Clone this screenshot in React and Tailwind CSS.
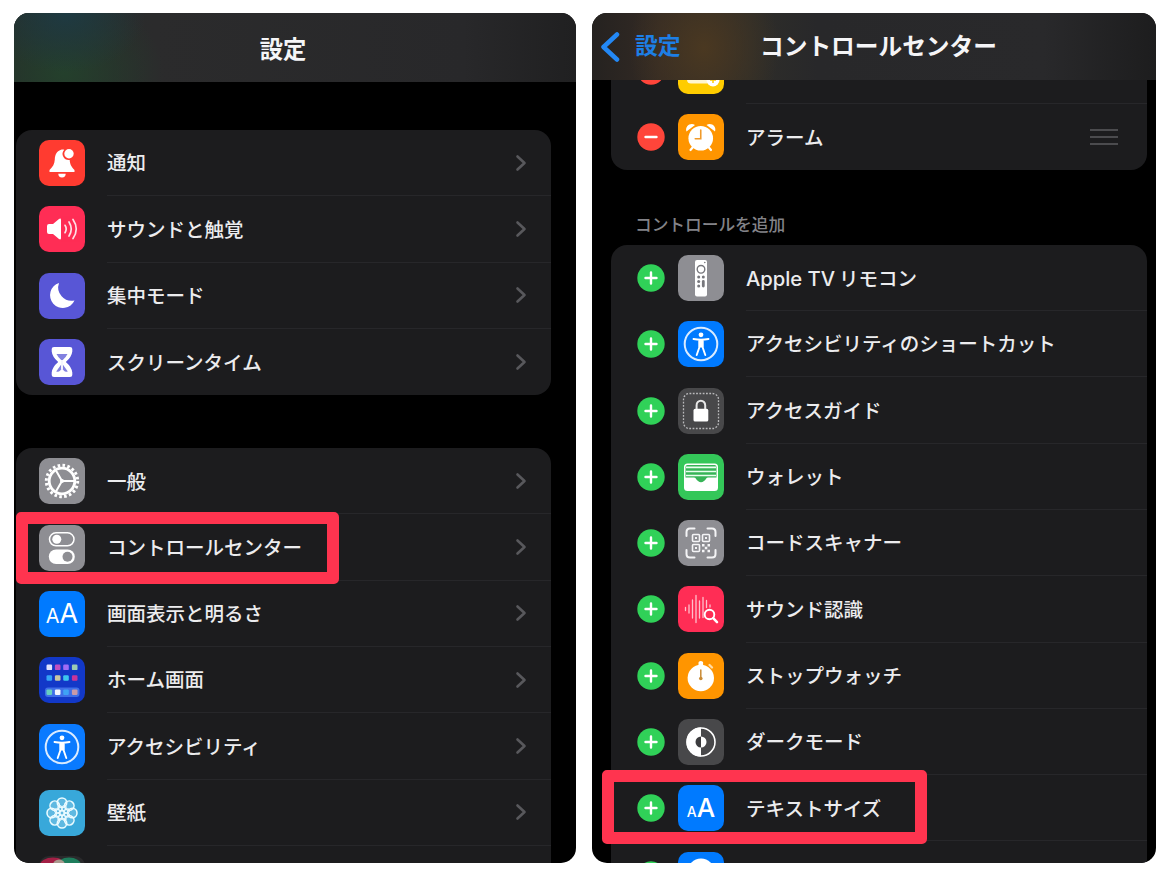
import React from 'react';
import clsx from 'clsx';

const PETALS = [0, 45, 90, 135, 180, 225, 270, 315];

const GLYPHS = {
    bell: (
        <g fill="#fff">
            <path d="M22 9.700c-4.500 1.500-6 5-6.200 9.800-.3 4.500-1.800 7-5.300 10.500v2h25v-2c-3.500-3.500-4.500-6-4.800-10a6.200 6.200 0 0 1-5.500-10.300c-1.100-.3-2.200-.3-3.200 0z" />
            <circle cx="30" cy="13.800" r="4.700" />
            <path d="M19.300 33.800h7.400a3.700 3.700 0 0 1-7.400 0z" />
        </g>
    ),
    speaker: (
        <g>
            <path d="M8 20q0-2 2-2h4l6-5q2-1.300 2 1v18q0 2.300-2 1l-6-5h-4q-2 0-2-2z" fill="#fff" />
            <g fill="none" stroke="#fff" strokeLinecap="round" strokeWidth="1.700" opacity="0.850">
                <path d="M26 19.300q2.400 3.700 0 7.400" />
                <path d="M30 16q4.500 7 0 14" />
                <path d="M34 13.500q6.500 9.500 0 19" />
            </g>
        </g>
    ),
    moon: <path d="M20 10a12.800 12.800 0 1 0 15.500 17.500A13.400 13.400 0 0 1 20 10z" fill="#fff" />,
    hourglass: (
        <g>
            <path d="M15 8h16q2.300 0 2.300 2v2.500q-.6 5.500-6.500 10.500 5.900 5 6.500 10.500V36q0 2-2.300 2H15q-2.300 0-2.300-2v-2.500q.6-5.500 6.500-10.500-5.900-5-6.500-10.500V10q0-2 2.300-2z" fill="#fff" />
            <path d="M17.500 15h11q-1.700 3.500-4.700 6v4.500l5 7q-2.500.8-3.800-.8L23 29.500l-2 2.200q-1.300 1.600-3.800.8l5-7V21q-3-2.500-4.700-6z" fill="#5856d6" opacity="0.750" />
            <path d="M23 21v9" stroke="#fff" strokeWidth="1.800" />
        </g>
    ),
    gear: (
        <g fill="none" stroke="#fff">
            <circle cx="23" cy="23" r="15.700" strokeWidth="3" strokeDasharray="2.600 2.332" />
            <circle cx="23" cy="23" r="12.800" strokeWidth="2.800" />
            <path d="M23 23h12M23 23l-6-10.400M23 23l-6 10.400" strokeWidth="2" />
            <circle cx="23" cy="23" r="2" fill="#fff" stroke="none" />
        </g>
    ),
    toggles: (
        <g>
            <rect x="10.500" y="7.800" width="24.500" height="13" rx="6.500" fill="none" stroke="#fff" strokeWidth="1.500" />
            <circle cx="17.800" cy="14.300" r="4.500" fill="#fff" />
            <rect x="9.800" y="24.500" width="26" height="14.500" rx="7.250" fill="#fff" />
            <circle cx="28.500" cy="31.700" r="5" fill="#8e8e93" />
        </g>
    ),
    home: (
        <g>
            <rect x="6" y="30.500" width="34.500" height="9.500" rx="3" fill="#3f6fe8" />
            {[
                [10.3, 10.3, '#dfe3ff'], [18.7, 10.3, '#c04fc0'], [27, 10.3, '#a06cf5'], [35.7, 10.3, '#9ccbb4'],
                [10.3, 21, '#35a4f7'], [18.7, 21, '#c9c7a2'], [27, 21, '#3cc7ee'], [35.7, 21, '#c8349a'],
                [10.3, 35.2, '#67cfc0'], [18.7, 35.2, '#f0f5ff'], [27, 35.2, '#3ea2f5'], [35.7, 35.2, '#c99aa8'],
            ].map(([x, y, fill]) => (
                <rect key={`${x}-${y}`} x={x - 2.8} y={y - 2.8} width="5.600" height="5.600" rx="1.200" fill={fill} />
            ))}
        </g>
    ),
    person: (
        <g>
            <circle cx="23" cy="23" r="16.300" fill="none" stroke="#fff" strokeWidth="2" opacity="0.850" />
            <circle cx="23" cy="13.800" r="2.400" fill="#fff" />
            <path d="M15.500 18q7.500 1.500 15 0M21.300 19.500v7L18.700 34M24.700 19.500v7l2.600 7.500" fill="none" stroke="#fff" strokeWidth="1.900" strokeLinecap="round" strokeLinejoin="round" />
            <path d="M20.800 18.500h4.400v8h-4.400z" fill="#fff" />
        </g>
    ),
    flower: (
        <g fill="#ffffff33" stroke="#e9fbff" strokeWidth="1.600">
            {PETALS.map((deg) => (
                <circle key={deg} cx="23" cy="12.700" r="4.700" transform={`rotate(${deg} 23 23)`} />
            ))}
            {PETALS.map((deg) => (
                <ellipse key={`in-${deg}`} cx="23" cy="18" rx="2" ry="3" strokeWidth="1" transform={`rotate(${deg + 22.5} 23 23)`} />
            ))}
            <circle cx="23" cy="23" r="2.500" />
        </g>
    ),
    orb: (
        <g>
            <ellipse cx="14" cy="9" rx="13" ry="7.500" fill="#a31f45" />
            <ellipse cx="30" cy="9" rx="12" ry="7.500" fill="#1e7d5c" />
            <ellipse cx="20" cy="9" rx="6" ry="5.500" fill="#a9998e" />
        </g>
    ),
    alarm: (
        <g>
            <path d="M15 33l-2.500 3M30.500 33l2.500 3" stroke="#fff" strokeWidth="2.200" strokeLinecap="round" />
            <path d="M8.500 17.500c-2-5 4-9.500 8.500-6.500zM37 17.500c2-5-4-9.500-8.500-6.500z" fill="#fff" />
            <circle cx="22.750" cy="24.300" r="12.300" fill="#fff" />
            <path d="M22.750 16v8.800h-5.500" fill="none" stroke="#f09a2a" strokeWidth="1.600" strokeLinecap="round" />
        </g>
    ),
    memo: (
        <g>
            <rect x="9" y="14" width="24" height="21.500" rx="4" fill="#fff6cf" />
            <circle cx="35" cy="32" r="6.500" fill="#fff" />
            <path d="M35 29v6M32 32h6" stroke="#ffcc00" strokeWidth="1.500" />
        </g>
    ),
    remote: (
        <g>
            <rect x="17" y="5" width="12" height="36.500" rx="2" fill="#fff" />
            <circle cx="23" cy="14.300" r="3.800" fill="none" stroke="#77777c" strokeWidth="1.400" />
            <circle cx="26.800" cy="7.500" r=".8" fill="#77777c" />
            <g fill="#77777c">
                <circle cx="20.700" cy="22" r="1.500" />
                <circle cx="25.300" cy="22" r="1.500" />
                <circle cx="20.700" cy="26.500" r="1.500" />
                <circle cx="20.700" cy="31" r="1.500" />
                <rect x="23.900" y="25" width="2.800" height="7.500" rx="1.400" />
            </g>
        </g>
    ),
    guide: (
        <g>
            <rect x="5.500" y="5.500" width="35" height="35" rx="6" fill="none" stroke="#b9b9bb" strokeWidth="1.300" strokeDasharray="1.800 1.500" />
            <rect x="15.500" y="20.800" width="14.800" height="12.800" rx="1.700" fill="#fff" />
            <path d="M18.600 21v-3.700a4.300 4.600 0 0 1 8.600 0V21" fill="none" stroke="#e8e8e8" strokeWidth="2" />
        </g>
    ),
    wallet: (
        <g>
            <rect x="6" y="9.500" width="34" height="27.500" rx="3.500" fill="#fff" />
            <path d="M7.500 23.500V13q0-2 2-2h27q2 0 2 2v10.500h-8.500q-2 0-3 1.500-4 3.500-8 0-1-1.500-3-1.500z" fill="#36b457" />
            <path d="M8 13.300h30M8 17.500h30M8 21.500h30" stroke="#eafff0" strokeWidth="1.700" />
            <path d="M8 24h9q4 5.500 6 5.500t6-5.500h9v3H8z" fill="#fff" />
            <path d="M17 23.500h12q-3 4.700-6 4.700t-6-4.700z" fill="#36b457" />
        </g>
    ),
    qr: (
        <g fill="none" stroke="#f4f4f6">
            <path d="M8.500 16v-4q0-3.500 3.500-3.500h4.500M29.500 8.500H34q3.500 0 3.500 3.500v4M37.500 30v4q0 3.500-3.500 3.500h-4.500M16.500 37.500H12q-3.500 0-3.500-3.500v-4" strokeWidth="2" strokeLinecap="round" />
            <g strokeWidth="1.600">
                <rect x="14.500" y="14.500" width="7" height="7" rx="1" />
                <rect x="24.500" y="14.500" width="7" height="7" rx="1" />
                <rect x="14.500" y="24.500" width="7" height="7" rx="1" />
            </g>
            <path d="M17 17h2v2h-2zM27 17h2v2h-2zM17 27h2v2h-2zM24 24h2.500v2.500H24zM29.500 24H32v2.500h-2.500zM26.800 26.800h2.500v2.500h-2.500zM24 29.700h2.500v2.500H24zM29.500 29.700H32v2.500h-2.500z" fill="#f4f4f6" stroke="none" />
        </g>
    ),
    waveform: (
        <g fill="none" stroke="#fff" strokeLinecap="round">
            <path d="M7.500 21.500v3M11 19v8M14.500 14v18M18 9.500v27M21.500 15v17M25 11.500v20M28.500 14.500v7M32 19v2" strokeWidth="1.300" opacity="0.700" />
            <circle cx="31.500" cy="28.500" r="4.800" strokeWidth="1.900" fill="#ff2d55" />
            <path d="M35.200 32.200l3.800 4" strokeWidth="2.500" />
        </g>
    ),
    stopwatch: (
        <g>
            <circle cx="22.800" cy="25" r="13.200" fill="#fff" />
            <path d="M20.500 9.500q0-1.500 2.300-1.500t2.300 1.500V13h-4.600z" fill="#fff" />
            <path d="M31.500 12l2.500 2.500" stroke="#ffdca6" strokeWidth="2.300" strokeLinecap="round" />
            <path d="M22.800 17v8" stroke="#c98a35" strokeWidth="1.500" strokeLinecap="round" />
            <circle cx="22.800" cy="25.500" r="1.800" fill="#c98a35" />
        </g>
    ),
    contrast: (
        <g>
            <circle cx="23" cy="23" r="14" fill="none" stroke="#fff" strokeWidth="1.600" />
            <path d="M23 8.500a14.500 14.500 0 0 0 0 29z" fill="#fff" />
            <path d="M23 17.500a5.500 5.500 0 0 0 0 11z" fill="#3c3c3e" />
            <path d="M23 17.500a5.500 5.500 0 0 1 0 11z" fill="#fff" />
        </g>
    ),
    disc: <circle cx="23" cy="20" r="13.500" fill="#fff" />,
};

const AppIcon = ({ glyph, color }) => {
    if (glyph === 'letters' || glyph === 'lettersSmall') {
        const small = glyph === 'lettersSmall';
        return (
            <div className={clsx('flex h-[46px] w-[46px] shrink-0 items-baseline justify-center rounded-[10px] font-[Inter] leading-[46px] text-white', color)}>
                <span className={small ? 'text-[14px] font-medium' : 'text-[20px]'}>A</span>
                <span className={small ? 'text-[26px] font-medium' : 'text-[27px]'}>A</span>
            </div>
        );
    }
    return (
        <div className={clsx('h-[46px] w-[46px] shrink-0 overflow-hidden rounded-[10px]', color)}>
            <svg viewBox="0 0 46 46" className="block h-full w-full">{GLYPHS[glyph]}</svg>
        </div>
    );
};

const EditButton = ({ remove }) => (
    <svg viewBox="0 0 28 28" className="mr-[13px] block h-[28px] w-[28px] shrink-0">
        <circle cx="14" cy="14" r="13.700" fill={remove ? '#ff453a' : '#30d158'} />
        <path d={remove ? 'M8.500 14h11' : 'M8.500 14h11M14 8.500v11'} stroke="#fff" strokeWidth="2.400" strokeLinecap="round" />
    </svg>
);

const Highlight = ({ className }) => (
    <div className={clsx('absolute z-10 rounded-[5px] border-[12px] border-[#ff344f]', className)} />
);

const Row = ({ item, last, edit, children }) => (
    <div className={clsx('relative flex h-[66.300px] shrink-0 items-center', edit ? 'pl-[26px]' : 'pl-[23px]')}>
        {edit && <EditButton remove={edit === 'remove'} />}
        <AppIcon glyph={item.glyph} color={item.color} />
        <div className={clsx('ml-[22px] flex h-full flex-1 items-center justify-between', !last && 'border-b border-[#27272a]')}>
            <span className="whitespace-pre pt-[3px] text-[19.500px] font-medium leading-none text-[#ececee]">
                {item.latin && <span className="mr-[4px] text-[20.200px]">{item.latin}</span>}
                {item.label}
            </span>
            {children}
        </div>
    </div>
);

const Chevron = () => (
    <svg viewBox="0 0 12 18" className="mr-[24px] h-[18px] w-[12px]" fill="none">
        <path d="M2.500 2.500L9.500 9l-7 6.500" stroke="#58585c" strokeWidth="2.600" strokeLinecap="round" strokeLinejoin="round" />
    </svg>
);

const Grip = () => (
    <div className="mr-[29px] flex w-[28px] flex-col gap-[5px]">
        <div className="h-[2px] bg-[#4b4b4e]" />
        <div className="h-[2px] bg-[#4b4b4e]" />
        <div className="h-[2px] bg-[#4b4b4e]" />
    </div>
);

const noticeItems = [
    { label: '通知', glyph: 'bell', color: 'bg-[#ff3b30]' },
    { label: 'サウンドと触覚', glyph: 'speaker', color: 'bg-[#ff2d55]' },
    { label: '集中モード', glyph: 'moon', color: 'bg-[#5856d6]' },
    { label: 'スクリーンタイム', glyph: 'hourglass', color: 'bg-[#5856d6]' },
];

const generalItems = [
    { label: '一般', glyph: 'gear', color: 'bg-[#8e8e93]' },
    { label: 'コントロールセンター', glyph: 'toggles', color: 'bg-[#8e8e93]', marked: true },
    { label: '画面表示と明るさ', glyph: 'letters', color: 'bg-[#007aff]' },
    { label: 'ホーム画面', glyph: 'home', color: 'bg-[#1238c8]' },
    { label: 'アクセシビリティ', glyph: 'person', color: 'bg-[#0a7aff]' },
    { label: '壁紙', glyph: 'flower', color: 'bg-[#38a8da]' },
    { label: '', glyph: 'orb', color: 'bg-[#2a2a2c]' },
];

const controlItems = [
    { latin: 'Apple TV', label: 'リモコン', glyph: 'remote', color: 'bg-[#8e8e93]' },
    { label: 'アクセシビリティのショートカット', glyph: 'person', color: 'bg-[#007aff]' },
    { label: 'アクセスガイド', glyph: 'guide', color: 'bg-[#48484a]' },
    { label: 'ウォレット', glyph: 'wallet', color: 'bg-[#34c759]' },
    { label: 'コードスキャナー', glyph: 'qr', color: 'bg-[#8e8e93]' },
    { label: 'サウンド認識', glyph: 'waveform', color: 'bg-[#ff2d55]' },
    { label: 'ストップウォッチ', glyph: 'stopwatch', color: 'bg-[#ff9500]' },
    { label: 'ダークモード', glyph: 'contrast', color: 'bg-[#48484a]' },
    { label: 'テキストサイズ', glyph: 'lettersSmall', color: 'bg-[#007aff]', marked: true },
    { label: '', glyph: 'disc', color: 'bg-[#007aff]' },
];

const SettingsScreen = () => (
    <div className="flex h-[850px] w-[562px] flex-col overflow-hidden rounded-[15px] bg-black">
        <div className="flex h-[69px] shrink-0 items-center justify-center bg-[radial-gradient(ellipse_80px_60px_at_52px_0px,#1e3a42,transparent),radial-gradient(ellipse_100px_80px_at_50px_60px,#24402c,transparent),linear-gradient(90deg,#262c2a,#2b2b2c_25%,#28282a_80%,#202021)] pr-[24px] pt-[5px]">
            <h1 className="text-[23.300px] font-bold leading-none text-[#f5f5f7]">設定</h1>
        </div>
        <div className="ml-[2px] mt-[48px] w-[535px] shrink-0 rounded-[16px] bg-[#1c1c1e]">
            {noticeItems.map((item, i) => (
                <Row key={item.glyph} item={item} last={i === noticeItems.length - 1}>
                    <Chevron />
                </Row>
            ))}
        </div>
        <div className="ml-[2px] mt-[53px] w-[535px] shrink-0 rounded-t-[16px] bg-[#1c1c1e]">
            {generalItems.map((item) => (
                <Row key={item.glyph} item={item}>
                    <Chevron />
                    {item.marked && <Highlight className="-top-[2px] left-0 h-[72px] w-[323px]" />}
                </Row>
            ))}
        </div>
    </div>
);

const ControlCenterScreen = () => (
    <div className="flex h-[850px] w-[564px] flex-col overflow-hidden rounded-[15px] bg-black">
        <div className="flex h-[67px] shrink-0 items-center bg-[radial-gradient(ellipse_75px_90px_at_112px_35px,#4a3821,transparent),linear-gradient(90deg,#252220,#332a24_12%,#2e2d29_28%,#28282a_40%,#29292b_80%,#1d1d1e)] pl-[8px]">
            <svg viewBox="0 0 20 32" className="h-[32px] w-[20px]" fill="none">
                <path d="M17 3.500L3.500 16 17 28.500" stroke="#2388f5" strokeWidth="4.500" strokeLinecap="round" strokeLinejoin="round" />
            </svg>
            <span className="ml-[15px] w-[125px] text-[22.800px] font-bold leading-none text-[#1d7fe6]">設定</span>
            <h1 className="text-[23.700px] font-bold leading-none text-[#f5f5f7]">コントロールセンター</h1>
        </div>
        <div className="ml-[19px] w-[536px] shrink-0 rounded-b-[16px] bg-[#1c1c1e]">
            <div className="flex h-[24px] flex-col justify-end overflow-hidden">
                <Row item={{ label: '', glyph: 'memo', color: 'bg-[#ffcc00]' }} edit="remove" />
            </div>
            <Row item={{ label: 'アラーム', glyph: 'alarm', color: 'bg-[#ff9500]' }} edit="remove" last>
                <Grip />
            </Row>
        </div>
        <div className="flex h-[74.500px] shrink-0 items-end pb-[11px] pl-[43px]">
            <h2 className="text-[16.700px] font-medium leading-none text-[#838388]">コントロールを追加</h2>
        </div>
        <div className="ml-[19px] w-[536px] shrink-0 rounded-t-[16px] bg-[#1c1c1e]">
            {controlItems.map((item) => (
                <Row key={item.glyph} item={item} edit="add">
                    {item.marked && <Highlight className="-left-[9px] -top-[5px] h-[74px] w-[325px]" />}
                </Row>
            ))}
        </div>
    </div>
);

const App = () => (
    <div className="flex h-[878px] w-[1170px] gap-[16px] overflow-hidden bg-white pl-[14px] pt-[13px] font-[Inter,'Noto_Sans_CJK_JP',sans-serif]" lang="ja">
        <SettingsScreen />
        <ControlCenterScreen />
    </div>
);

export default App;
